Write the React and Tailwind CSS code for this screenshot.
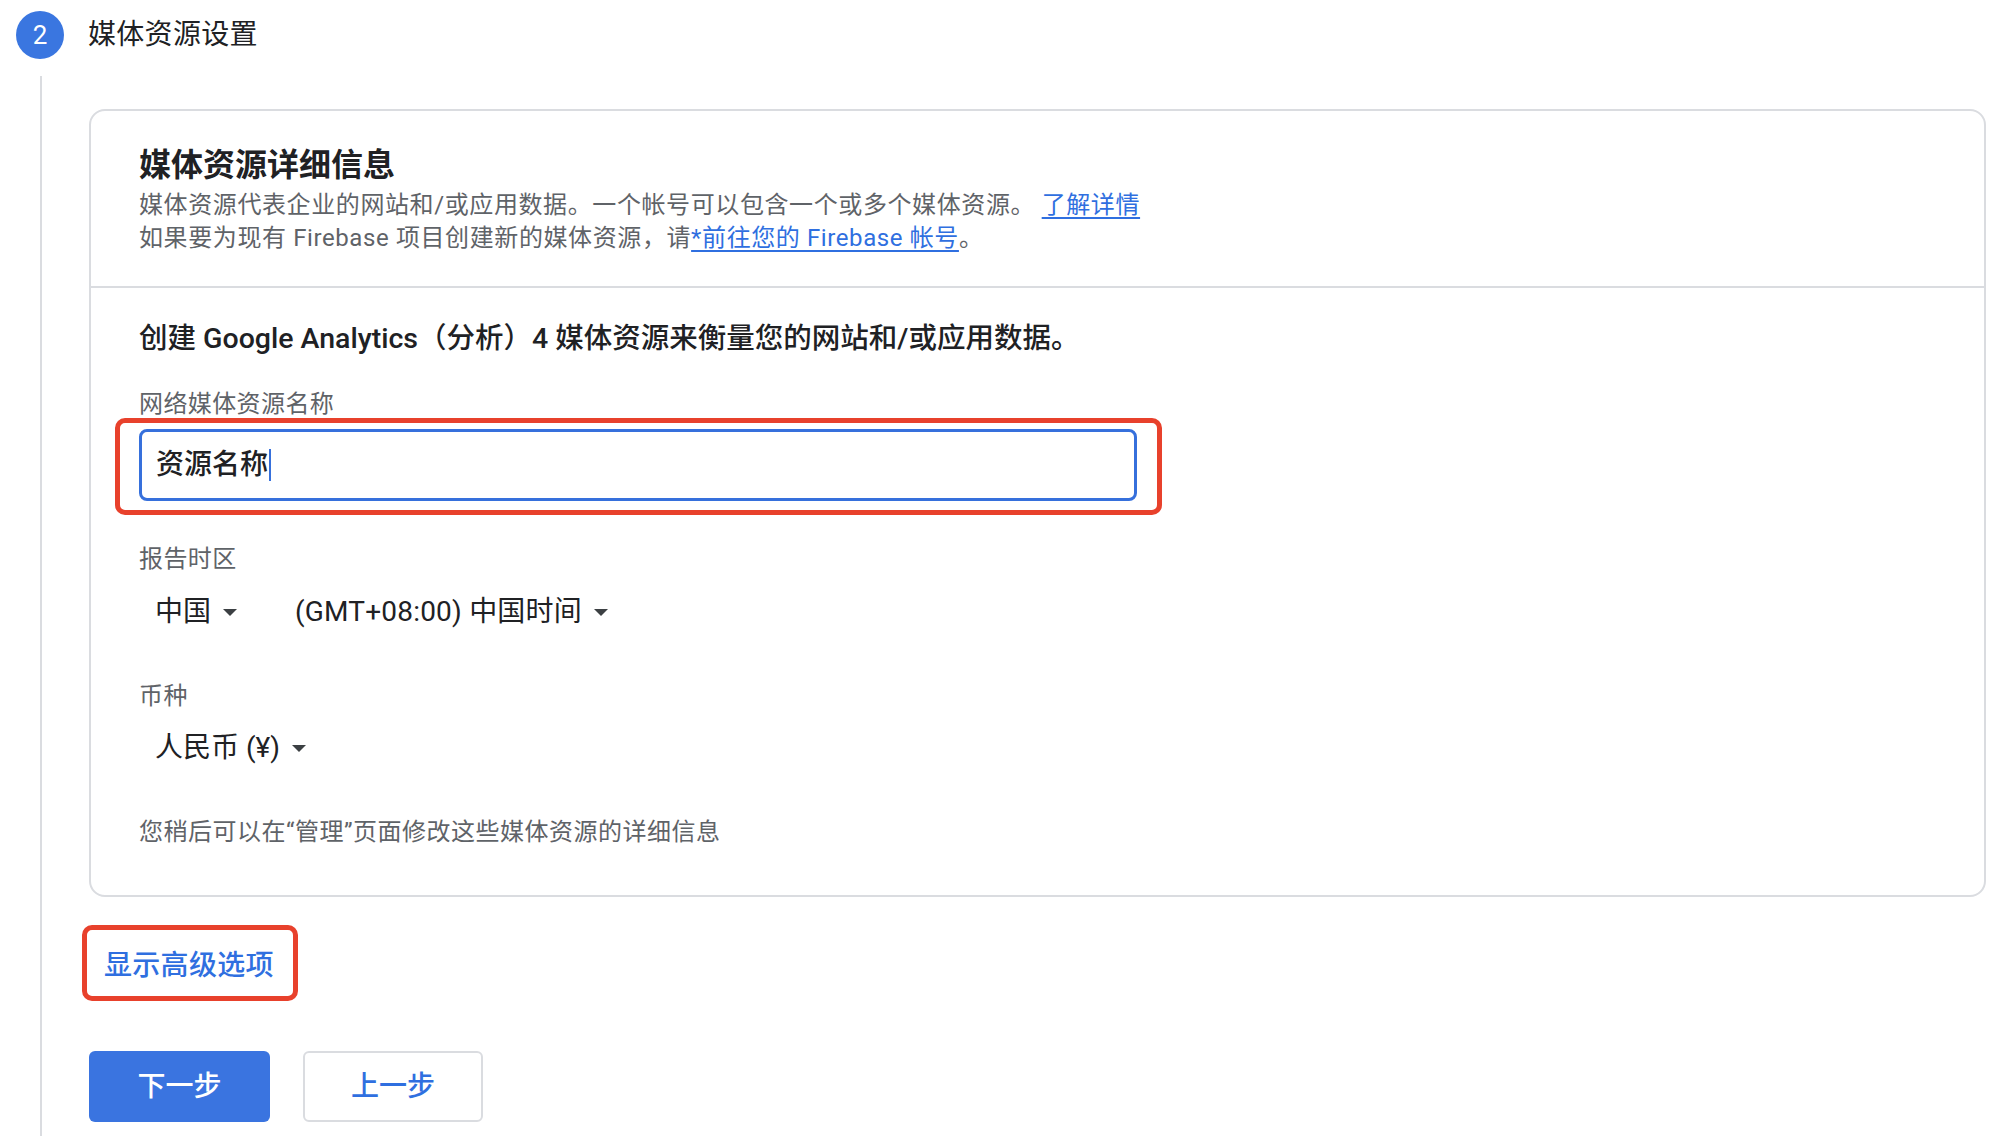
import React from "react";

const font = { fontFamily: '"Roboto", "Noto Sans CJK SC", sans-serif' };

function Caret() {
  return (
    <svg width="14" height="7" viewBox="0 0 14 7" className="ml-3 shrink-0">
      <path d="M0 0 L14 0 L7 7 Z" fill="#3c4043" />
    </svg>
  );
}

function Dropdown({ children }) {
  return (
    <button className="flex items-center pl-4 text-[28px] leading-[40px] text-[#202124]">
      {children}
      <Caret />
    </button>
  );
}

export default function App() {
  return (
    <div className="w-[1998px] h-[1136px] bg-white overflow-hidden" style={font}>
      {/* step header */}
      <div className="flex items-center h-[76px] pl-4 pb-[6px]">
        <div className="w-12 h-12 rounded-full bg-[#3a76e0] text-white text-[26px] flex items-center justify-center">
          2
        </div>
        <h2 className="ml-6 text-[28px] leading-[36px] tracking-[0.3px] text-[#202124]">媒体资源设置</h2>
      </div>

      <div className="flex h-[1060px]">
        {/* step line */}
        <div className="w-[89px] shrink-0">
          <div className="ml-[40px] w-[2px] h-full bg-[#dadce0]"></div>
        </div>

        <div className="w-[1897px]">
          {/* details card */}
          <div className="mt-[33px] border-2 border-[#dadce0] rounded-[16px]">
            <div className="px-[48px] pt-[34px] pb-[31px] border-b-2 border-[#dadce0]">
              <h3 className="text-[32px] leading-[40px] font-semibold text-[#202124]">媒体资源详细信息</h3>
              <p className="mt-[4px] text-[24px] leading-[33px] tracking-[0.6px] text-[#5f6368]">
                媒体资源代表企业的网站和/或应用数据。一个帐号可以包含一个或多个媒体资源。{" "}
                <a href="#" className="text-[#2f6fe0] underline underline-offset-4">了解详情</a>
                <br />
                如果要为现有 Firebase 项目创建新的媒体资源，请
                <a href="#" className="text-[#2f6fe0] underline underline-offset-4">*前往您的 Firebase 帐号</a>。
              </p>
            </div>

            <div className="px-[48px] pt-[33px] pb-[47px]">
              <p className="text-[28.5px] leading-[36px] font-medium text-[#202124]">
                创建 Google Analytics（分析）4 媒体资源来衡量您的网站和/或应用数据。
              </p>

              <label className="block mt-[31px] text-[24px] leading-[32px] tracking-[0.4px] text-[#5f6368]">网络媒体资源名称</label>
              <div className="relative mt-[9px] w-[998px]">
                <div className="h-[72px] border-[3px] border-[#3670dc] rounded-[8px] flex items-center px-[14px]">
                  <span className="text-[28px] font-medium text-[#202124]">资源名称</span>
                  <span className="ml-[1px] w-[2px] h-[32px] bg-[#3670dc]"></span>
                </div>
                <div className="absolute -left-[24px] -top-[11px] -right-[25px] -bottom-[14px] border-[5px] border-[#e8412c] rounded-[10px] pointer-events-none"></div>
              </div>

              <label className="block mt-[42px] text-[24px] leading-[32px] tracking-[0.4px] text-[#5f6368]">报告时区</label>
              <div className="flex items-center gap-[58px] mt-[17px]">
                <Dropdown>中国</Dropdown>
                <button className="flex items-center text-[28px] leading-[40px] tracking-[0.2px] text-[#202124]">
                  (GMT+08:00) 中国时间
                  <Caret />
                </button>
              </div>

              <label className="block mt-[48px] text-[24px] leading-[32px] tracking-[0.4px] text-[#5f6368]">币种</label>
              <div className="flex mt-[16px]">
                <Dropdown>人民币 (¥)</Dropdown>
              </div>

              <p className="mt-[48px] text-[24px] leading-[32px] tracking-[0.5px] text-[#5f6368]">
                您稍后可以在“管理”页面修改这些媒体资源的详细信息
              </p>
            </div>
          </div>

          {/* advanced options */}
          <div className="mt-[51px] ml-[15px]">
            <span className="relative inline-block">
              <a href="#" className="text-[28px] leading-[36px] tracking-[0.3px] font-medium text-[#2f6fe0]">显示高级选项</a>
              <span className="absolute -left-[22px] -top-[23px] -right-[24px] -bottom-[17px] border-[5px] border-[#e8412c] rounded-[10px] pointer-events-none"></span>
            </span>
          </div>

          {/* actions */}
          <div className="flex gap-[33px] mt-[67px]">
            <button className="w-[181px] h-[71px] rounded-[6px] bg-[#3a74e0] text-white text-[28px] font-medium">
              下一步
            </button>
            <button className="w-[180px] h-[71px] rounded-[6px] border-2 border-[#dadce0] bg-white text-[#2f6fe0] text-[28px] font-medium">
              上一步
            </button>
          </div>
        </div>
      </div>
    </div>
  );
}
